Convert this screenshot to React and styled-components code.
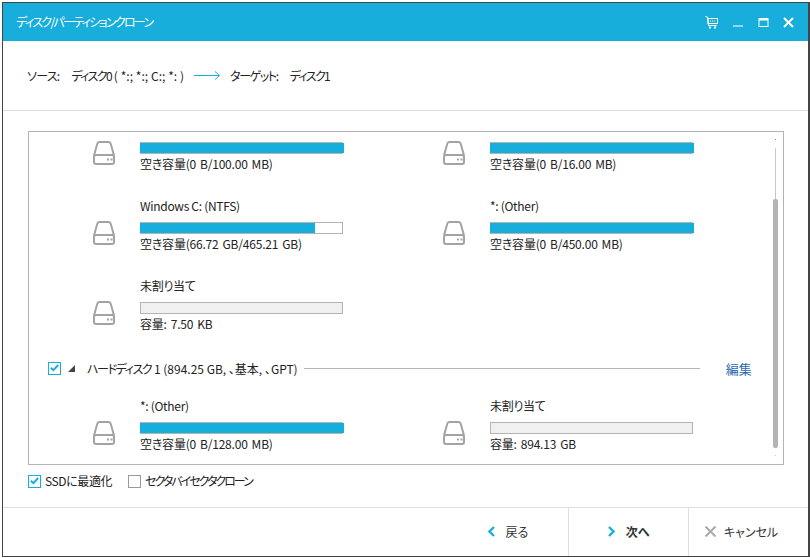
import styled, { createGlobalStyle } from "styled-components";

const BLUE = "#18aedc";

const GlobalStyle = createGlobalStyle`
  html, body {
    margin: 0;
    padding: 0;
    background: #fff;
  }
  body {
    font-family: "Noto Sans CJK JP", "Liberation Sans", sans-serif;
    font-size: 12px;
    font-feature-settings: "palt";
    color: #222;
  }
`;

const Page = styled.div`
  padding: 2px 0 0 2px;
`;

const Window = styled.div`
  box-sizing: border-box;
  width: 808px;
  height: 555px;
  border: 1px solid #444;
  border-right-width: 2px;
  display: flex;
  flex-direction: column;
  background: #fff;
`;

const TitleBar = styled.div`
  height: 38px;
  flex: none;
  background: ${BLUE};
  color: #fff;
  display: flex;
  align-items: center;
  padding: 0 14px 0 13px;
`;

const Title = styled.div`
  flex: 1;
  font-size: 12px;
  line-height: 16px;
  letter-spacing: -1.7px;
`;

const TitleIcons = styled.div`
  display: flex;
  align-items: center;
  gap: 14px;
`;

// the original's katakana is much narrower than Noto's
const Narrow = styled.span`
  letter-spacing: ${(p) => p.$spacing || -1.7}px;
`;

const Header = styled.div`
  height: 70px;
  flex: none;
  box-sizing: border-box;
  border-bottom: 1px solid #dedede;
  display: flex;
  align-items: center;
  padding-left: 24px;
  line-height: 16px;
`;

const HeaderLabel = styled(Narrow)`
  margin-right: 12px;
`;

const SourceText = styled.span`
  word-spacing: 0.2px;
`;

const ArrowWrap = styled.span`
  display: flex;
  margin: 0 10px;
`;

const Panel = styled.div`
  box-sizing: border-box;
  margin: 20px 24px 0 25px;
  height: 334px;
  flex: none;
  border: 1px solid #b4b4b4;
  display: flex;
  overflow: hidden;
`;

const List = styled.div`
  flex: 1;
  min-width: 0;
  overflow: hidden;
`;

const ListInner = styled.div`
  margin-top: -14px;
`;

const Row = styled.div`
  display: grid;
  grid-template-columns: 350px 350px;
  height: 80px;
  padding-left: 64px;
`;

const Cell = styled.div`
  display: flex;
  gap: 25px;
`;

const IconSlot = styled.div`
  flex: none;
  width: 22px;
  padding-top: 23px;
`;

const CellText = styled.div`
  width: 204px;
`;

const PartName = styled.div`
  height: 16px;
  line-height: 16px;
  margin-bottom: 8px;
  letter-spacing: -0.3px;
`;

const Track = styled.div`
  box-sizing: border-box;
  width: 203px;
  height: 12px;
  border: 1px solid #b4b4b4;
  background: ${(p) => (p.$empty ? "#f0f0f0" : "#fff")};
`;

const Fill = styled.div`
  height: 10px;
  margin-left: -1px;
  background: ${BLUE};
`;

const Usage = styled.div`
  line-height: 16px;
  margin-top: 2px;
  white-space: nowrap;
  letter-spacing: -0.2px;
  word-spacing: 1.5px;
`;

const DiskHeading = styled.div`
  height: 20px;
  margin-bottom: 20px;
  display: flex;
  align-items: center;
  padding-left: 19px;
`;

const Check = styled.span`
  box-sizing: border-box;
  flex: none;
  width: 13px;
  height: 13px;
  border: 1px solid ${(p) => (p.$on ? BLUE : "#999")};
  display: flex;
  align-items: center;
  justify-content: center;
  background: #fff;
`;

const Triangle = styled.span`
  flex: none;
  width: 0;
  height: 0;
  margin: 0 12px 0 7px;
  border-left: 7px solid transparent;
  border-bottom: 7px solid #444;
`;

const DiskLabel = styled.span`
  white-space: nowrap;
`;

const DiskRule = styled.span`
  flex: none;
  width: 396px;
  height: 1px;
  margin-left: 6px;
  background: #b4b4b4;
`;

const EditLink = styled.a`
  margin-left: 26px;
  font-size: 13px;
  color: #2e6bb0;
`;

const ScrollColumn = styled.div`
  flex: none;
  width: 5px;
  margin-right: 5px;
  padding-top: 7px;
  display: flex;
  flex-direction: column;
  align-items: center;
`;

const ScrollDot = styled.span`
  flex: none;
  width: 1px;
  height: 1px;
  background: ${(p) => p.$color};
`;

const ScrollRail = styled.span`
  flex: none;
  width: 1px;
  height: 51px;
  margin-top: 8px;
  background: #c8c8c8;
`;

const ScrollThumb = styled.span`
  flex: none;
  width: 5px;
  height: 249px;
  margin-bottom: 7px;
  border-radius: 2px;
  background: #b4b4b4;
`;

const Options = styled.div`
  height: 42px;
  flex: none;
  box-sizing: border-box;
  display: flex;
  align-items: center;
  padding: 0 0 10px 25px;
`;

const Option = styled.label`
  display: flex;
  align-items: center;
  gap: 4px;
  margin-right: 16px;
  line-height: 16px;
`;

const Footer = styled.div`
  flex: 1;
  border-top: 1px solid #dedede;
  display: flex;
  justify-content: flex-end;
`;

const FooterButton = styled.div`
  box-sizing: border-box;
  width: 120px;
  display: flex;
  align-items: center;
  justify-content: center;
  gap: ${(p) => p.$gap || 11}px;
  padding: 0 ${(p) => p.$pad || 0}px 2px 0;
  border-left: ${(p) => (p.$first ? "0" : "1px solid #dedede")};
  font-weight: ${(p) => (p.$bold ? 700 : 400)};
  color: #333;
`;

const DriveIcon = () => (
  <svg width="22" height="24" viewBox="0 0 22 24" fill="none" stroke="#a3a3a3" strokeWidth="2">
    <path d="M1 14.5 L4.2 3 Q4.7 1 6.8 1 H15.2 Q17.3 1 17.8 3 L21 14.5" />
    <rect x="1" y="14" width="20" height="9" rx="2" />
    <path d="M14 18.5h2M17.5 18.5h2" strokeWidth="2" />
  </svg>
);

const CartIcon = () => (
  <svg width="13" height="13" viewBox="0 0 13 13" fill="none" stroke="#fff">
    <path d="M0.5 0.5 L2.5 1 L3.5 9.5 H12" />
    <rect x="3" y="2.5" width="9.5" height="5" />
    <path d="M5 5h1M7 5h1M9 5h1" />
    <path d="M4 11.5h2M9 11.5h2" strokeWidth="2" />
  </svg>
);

const WindowIcons = () => (
  <TitleIcons>
    <CartIcon />
    <svg width="12" height="12" viewBox="0 0 12 12">
      <rect x="1" y="9" width="10" height="2" fill="#8fd9f0" />
    </svg>
    <svg width="11" height="11" viewBox="0 0 11 11" fill="none" stroke="#fff">
      <rect x="1" y="1.5" width="9" height="8" />
      <path d="M1 2.5h9" strokeWidth="2" />
    </svg>
    <svg width="11" height="11" viewBox="0 0 11 11" stroke="#fff" strokeWidth="2">
      <path d="M1 1 L10 10 M10 1 L1 10" />
    </svg>
  </TitleIcons>
);

const Tick = () => (
  <svg width="9" height="8" viewBox="0 0 9 8" fill="none" stroke={BLUE} strokeWidth="2">
    <path d="M0.8 3.8 L3.4 6.2 L8.2 1" />
  </svg>
);

const Chevron = ({ left }) => (
  <svg width="7" height="11" viewBox="0 0 7 11" fill="none" stroke={BLUE} strokeWidth="2.4">
    <path d={left ? "M6 1 L1.5 5.5 L6 10" : "M1 1 L5.5 5.5 L1 10"} />
  </svg>
);

const partitions = [
  [
    { usage: "空き容量(0 B/100.00 MB)", used: 1 },
    { usage: "空き容量(0 B/16.00 MB)", used: 1 },
  ],
  [
    { name: "Windows C: (NTFS)", usage: "空き容量(66.72 GB/465.21 GB)", used: 0.858 },
    { name: "*: (Other)", usage: "空き容量(0 B/450.00 MB)", used: 1 },
  ],
  [{ name: "未割り当て", usage: "容量: 7.50 KB", used: 0 }],
];

const lastDisk = [
  { name: "*: (Other)", usage: "空き容量(0 B/128.00 MB)", used: 1 },
  { name: "未割り当て", usage: "容量: 894.13 GB", used: 0 },
];

const Partition = ({ item }) => (
  <Cell>
    <IconSlot>
      <DriveIcon />
    </IconSlot>
    <CellText>
      <PartName>{item.name}</PartName>
      <Track $empty={item.used === 0}>
        {item.used > 0 && <Fill style={{ width: Math.round(item.used * 204) }} />}
      </Track>
      <Usage>{item.usage}</Usage>
    </CellText>
  </Cell>
);

const PartitionRow = ({ items }) => (
  <Row>
    {items.map((item) => (
      <Partition key={item.usage} item={item} />
    ))}
  </Row>
);

export default function App() {
  return (
    <Page>
      <GlobalStyle />
      <Window>
        <TitleBar>
          <Title>ディスク/パーティションクローン</Title>
          <WindowIcons />
        </TitleBar>
        <Header>
          <HeaderLabel $spacing={-0.7}>ソース:</HeaderLabel>
          <SourceText>
            <Narrow>ディスク0</Narrow> ( *:; *:; C:; *: )
          </SourceText>
          <ArrowWrap>
            <svg width="26" height="9" viewBox="0 0 26 9" fill="none" stroke={BLUE}>
              <path d="M0 4.5 H25 M21 0.5 L25.5 4.5 L21 8.5" />
            </svg>
          </ArrowWrap>
          <HeaderLabel $spacing={-1.4}>ターゲット:</HeaderLabel>
          <Narrow>ディスク1</Narrow>
        </Header>
        <Panel>
          <List>
            <ListInner>
              {partitions.map((items) => (
                <PartitionRow key={items[0].usage} items={items} />
              ))}
              <DiskHeading>
                <Check $on>
                  <Tick />
                </Check>
                <Triangle />
                <DiskLabel>
                  <Narrow $spacing={-1.4}>ハードディスク</Narrow> 1 (894.25 GB, 、基本, 、GPT)
                </DiskLabel>
                <DiskRule />
                <EditLink>編集</EditLink>
              </DiskHeading>
              <PartitionRow items={lastDisk} />
            </ListInner>
          </List>
          <ScrollColumn>
            <ScrollDot $color="#888" />
            <ScrollRail />
            <ScrollThumb />
            <ScrollDot $color="#ccc" />
          </ScrollColumn>
        </Panel>
        <Options>
          <Option>
            <Check $on>
              <Tick />
            </Check>
            <Narrow $spacing={-0.4}>SSDに最適化</Narrow>
          </Option>
          <Option>
            <Check />
            <Narrow $spacing={-2}>セクタバイセクタクローン</Narrow>
          </Option>
        </Options>
        <Footer>
          <FooterButton $first>
            <Chevron left />
            戻る
          </FooterButton>
          <FooterButton $bold>
            <Chevron />
            次へ
          </FooterButton>
          <FooterButton $gap={8} $pad={14}>
            <svg width="11" height="11" viewBox="0 0 11 11" stroke="#aaa" strokeWidth="2">
              <path d="M0.5 0.5 L10.5 10.5 M10.5 0.5 L0.5 10.5" />
            </svg>
            キャンセル
          </FooterButton>
        </Footer>
      </Window>
    </Page>
  );
}
